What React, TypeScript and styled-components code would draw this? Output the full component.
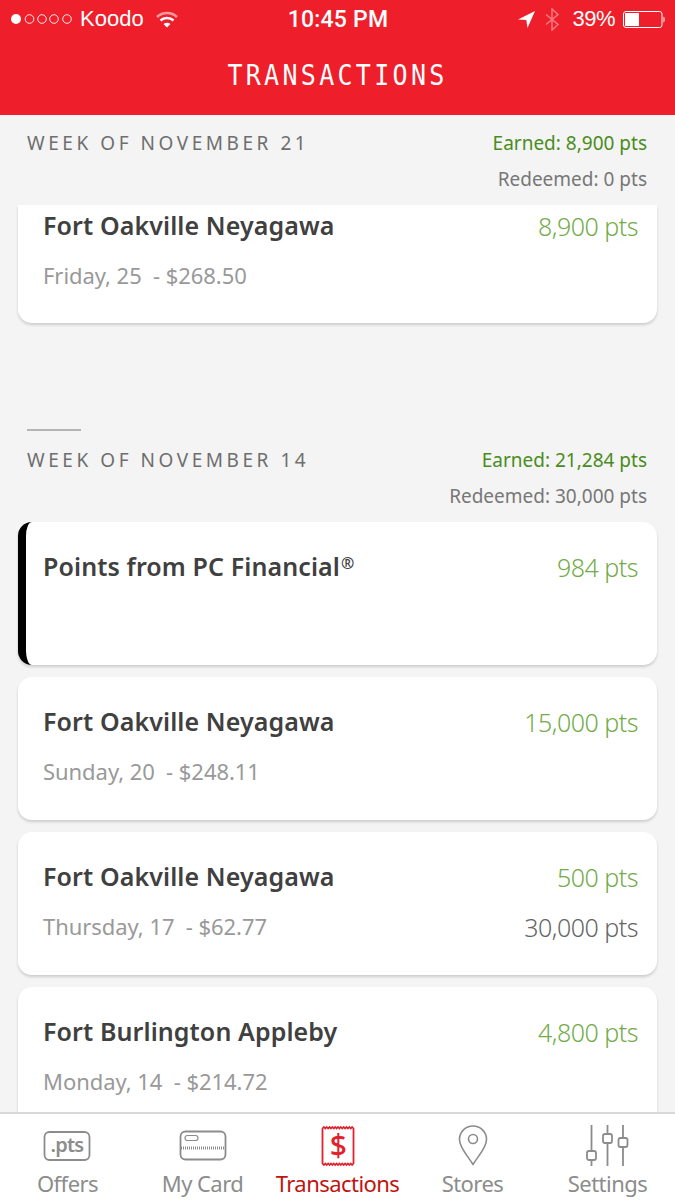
import styled, { createGlobalStyle } from "styled-components";

const GlobalStyle = createGlobalStyle`
  html, body {
    margin: 0;
    padding: 0;
    background: #f4f4f4;
  }
  * {
    box-sizing: border-box;
  }
`;

const Screen = styled.div`
  width: 675px;
  height: 1200px;
  display: flex;
  flex-direction: column;
  overflow: hidden;
  background: #f4f4f4;
  font-family: "Noto Sans", "Open Sans", sans-serif;
`;

const TopBar = styled.header`
  flex: 0 0 115px;
  background: #ee1f2b;
  color: #fff;
`;

const StatusBar = styled.div`
  height: 38px;
  display: grid;
  grid-template-columns: 1fr auto 1fr;
  align-items: center;
  padding: 0 10px 0 11px;
  font-family: "Liberation Sans", sans-serif;
  font-size: 22px;
`;

const StatusLeft = styled.div`
  display: flex;
  align-items: center;
  gap: 8px;
`;

const StatusRight = styled.div`
  display: flex;
  align-items: center;
  justify-content: flex-end;
  gap: 10px;
`;

const Battery = styled.span`
  margin-left: 3px;
  letter-spacing: -0.5px;
`;

const Clock = styled.div`
  font-family: Roboto, sans-serif;
  font-weight: 500;
  font-size: 23px;
  letter-spacing: 0.2px;
`;

const Title = styled.h1`
  margin: 0;
  height: 77px;
  padding-bottom: 2px;
  display: flex;
  align-items: center;
  justify-content: center;
  font-family: "DejaVu Sans Mono", monospace;
  font-weight: 400;
  font-size: 25px;
  letter-spacing: 3.3px;

  span {
    display: inline-block;
    transform: scaleY(1.16);
  }
`;

const Feed = styled.main`
  flex: 1;
  min-height: 0;
  overflow: hidden;
  padding: 10px 18px 0;
`;

const WeekRule = styled.div`
  width: 54px;
  height: 2px;
  margin: 106px 0 11px 9px;
  background: #b5b5b5;
`;

const WeekHeader = styled.div`
  display: flex;
  justify-content: space-between;
  padding: 0 10px 0 9px;
  margin-bottom: 8px;
`;

const WeekLabel = styled.div`
  font-size: 19px;
  line-height: 36px;
  letter-spacing: 3.55px;
  color: #6e6e6e;
`;

const Totals = styled.div`
  text-align: right;
  font-size: 19px;
  line-height: 36px;
`;

const Earned = styled.div`
  color: #4a8c1c;
`;

const Redeemed = styled.div`
  color: #777;
`;

const Card = styled.article<{ $clipped?: boolean; $flagged?: boolean }>`
  display: flex;
  justify-content: space-between;
  height: ${(p) => (p.$clipped ? "118px" : "143px")};
  margin-bottom: 12px;
  padding: ${(p) => (p.$clipped ? "3px" : "27px")} 19px 0 ${(p) => (p.$flagged ? "17px" : "25px")};
  background: #fff;
  border-left: ${(p) => (p.$flagged ? "8px solid #000" : "none")};
  border-radius: ${(p) => (p.$clipped ? "0 0 14px 14px" : "14px")};
  box-shadow: 0 2px 3px rgba(0, 0, 0, 0.16);
`;

const CardText = styled.div`
  margin-top: -1px;
`;

const Place = styled.div`
  font-size: 25px;
  line-height: 36px;
  font-weight: 600;
  letter-spacing: 0.1px;
  color: #404040;

  sup {
    font-size: 16px;
    line-height: 0;
    font-weight: 600;
    vertical-align: 7px;
    margin-left: 1px;
  }
`;

const Detail = styled.div`
  margin-top: 14px;
  font-size: 22px;
  line-height: 36px;
  letter-spacing: -0.05px;
  color: #999;
`;

const Points = styled.div`
  text-align: right;
`;

const PointsLine = styled.div<{ $muted?: boolean }>`
  font-size: 25px;
  line-height: 36px;
  font-weight: 300;
  letter-spacing: -0.5px;
  color: ${(p) => (p.$muted ? "#666" : "#73ab4a")};

  & + & {
    margin-top: 14px;
  }
`;

const TabBar = styled.nav`
  flex: 0 0 88px;
  display: grid;
  grid-template-columns: repeat(5, 135px);
  background: #fff;
  border-top: 2px solid #d8d8d8;
`;

const Tab = styled.div<{ $active?: boolean }>`
  display: flex;
  flex-direction: column;
  align-items: center;
  justify-content: flex-end;
  padding-bottom: 1px;
  color: ${(p) => (p.$active ? "#c0140f" : "#8c8c8c")};
  font-size: 22px;
  line-height: 32px;
  letter-spacing: -0.55px;
  white-space: nowrap;
`;

const TabIcon = styled.svg`
  display: block;
  height: 44px;
  flex: none;
`;

const SignalDots = () => (
  <svg width="61" height="12" viewBox="0 0 61 12">
    <circle cx="5" cy="6" r="5" fill="#fff" />
    {[18.5, 31, 43, 56].map((cx) => (
      <circle key={cx} cx={cx} cy="6" r="4.3" fill="none" stroke="#fff" strokeWidth="0.9" />
    ))}
  </svg>
);

const WifiIcon = () => (
  <svg width="22" height="17" viewBox="0 0 22 17" style={{ marginLeft: 4 }} fill="none" stroke="#fff">
    <path d="M1 6C6.5 0.5 15.5 0.5 21 6" strokeWidth="2.5" opacity="0.55" />
    <path d="M4.5 9.5C8 6.2 14 6.2 17.5 9.5" strokeWidth="2.5" />
    <path d="M11 16.5L7.5 13C9.5 11.3 12.5 11.3 14.5 13Z" fill="#fff" stroke="none" />
  </svg>
);

const LocationArrow = () => (
  <svg width="17" height="17" viewBox="0 0 17 17">
    <path d="M17 0L0 8.5L8.3 8.9L9.5 17Z" fill="#fff" />
  </svg>
);

const BluetoothIcon = () => (
  <svg width="14" height="23" viewBox="0 0 14 23" fill="none" stroke="#fff" strokeWidth="1.5" opacity="0.4">
    <path d="M1 6.5L13 16.5L7 22V1L13 6.5L1 16.5" />
  </svg>
);

const BatteryIcon = () => (
  <svg width="42" height="17" viewBox="0 0 42 17" style={{ marginLeft: -2 }}>
    <rect x="0.5" y="0.5" width="38.5" height="16" rx="2.5" fill="none" stroke="#fff" />
    <rect x="2" y="2" width="14" height="13" fill="#fff" />
    <path d="M40.5 5.5C42 6 42 11 40.5 11.5Z" fill="#fff" />
  </svg>
);

const OffersIcon = () => (
  <TabIcon viewBox="0 0 50 44" width="50">
    <rect x="1.5" y="9" width="45" height="28" rx="5" fill="none" stroke="currentColor" strokeWidth="1.8" />
    <text x="24" y="29" textAnchor="middle" fontFamily="Noto Sans, sans-serif" fontWeight="600" fontSize="20" letterSpacing="-0.8" fill="currentColor">
      .pts
    </text>
  </TabIcon>
);

const CardIcon = () => (
  <TabIcon viewBox="0 0 48 44" width="48">
    <rect x="1.5" y="8.5" width="45" height="28" rx="5" fill="none" stroke="currentColor" strokeWidth="1.8" />
    <rect x="6" y="12.5" width="13" height="5" rx="2.5" fill="none" stroke="currentColor" strokeWidth="1.2" />
    <path d="M2 25H46" stroke="currentColor" strokeWidth="3" strokeDasharray="1 1" />
  </TabIcon>
);

// serrated edge for the receipt, left to right or back
const serration = (y: number, dir: number, teeth: number) =>
  Array.from({ length: teeth }, (_, i) => {
    const step = 31 / teeth;
    const from = dir > 0 ? 1.5 + i * step : 32.5 - i * step;
    const mid = from + (dir * step) / 2;
    const to = from + dir * step;
    return `L${mid.toFixed(2)} ${y - dir * 1.5}L${to.toFixed(2)} ${y}`;
  }).join("");

const ReceiptIcon = () => (
  <TabIcon viewBox="0 0 34 44" width="34">
    <path
      d={`M1.5 5.5${serration(5.5, 1, 11)}V40.5${serration(40.5, -1, 11)}Z`}
      fill="none"
      stroke="#e3212c"
      strokeWidth="1.8"
    />
    <text x="17" y="33" textAnchor="middle" fontFamily="Noto Sans, sans-serif" fontWeight="500" fontSize="30" fill="#e3212c">
      $
    </text>
  </TabIcon>
);

const PinIcon = () => (
  <TabIcon viewBox="0 0 30 44" width="30">
    <path
      d="M15 41.5C10 33 1.5 25 1.5 16.5C1.5 9 7.5 3 15 3C22.5 3 28.5 9 28.5 16.5C28.5 25 20 33 15 41.5Z"
      fill="none"
      stroke="currentColor"
      strokeWidth="1.6"
      strokeLinejoin="round"
    />
    <circle cx="15" cy="16" r="4.5" fill="none" stroke="currentColor" strokeWidth="1.6" />
  </TabIcon>
);

const SlidersIcon = () => (
  <TabIcon viewBox="0 0 44 44" width="44">
    <g fill="none" stroke="currentColor" strokeWidth="1.8">
      <path d="M5.5 2V28M5.5 37V43M21.5 2V11M21.5 20V43M37 2V15M37 24V43" />
      <rect x="1" y="28" width="9" height="9" rx="2" />
      <rect x="17" y="11" width="9" height="9" rx="2" />
      <rect x="32.5" y="15" width="9" height="9" rx="2" />
    </g>
  </TabIcon>
);

const App = () => (
  <Screen>
    <GlobalStyle />
    <TopBar>
      <StatusBar>
        <StatusLeft>
          <SignalDots />
          Koodo
          <WifiIcon />
        </StatusLeft>
        <Clock>10:45 PM</Clock>
        <StatusRight>
          <LocationArrow />
          <BluetoothIcon />
          <Battery>39%</Battery>
          <BatteryIcon />
        </StatusRight>
      </StatusBar>
      <Title>
        <span>TRANSACTIONS</span>
      </Title>
    </TopBar>

    <Feed>
      <WeekHeader>
        <WeekLabel>WEEK OF NOVEMBER 21</WeekLabel>
        <Totals>
          <Earned>Earned: 8,900 pts</Earned>
          <Redeemed>Redeemed: 0 pts</Redeemed>
        </Totals>
      </WeekHeader>
      <Card $clipped>
        <CardText>
          <Place>Fort Oakville Neyagawa</Place>
          <Detail>Friday, 25 &nbsp;- $268.50</Detail>
        </CardText>
        <Points>
          <PointsLine>8,900 pts</PointsLine>
        </Points>
      </Card>

      <WeekRule />
      <WeekHeader>
        <WeekLabel>WEEK OF NOVEMBER 14</WeekLabel>
        <Totals>
          <Earned>Earned: 21,284 pts</Earned>
          <Redeemed>Redeemed: 30,000 pts</Redeemed>
        </Totals>
      </WeekHeader>
      <Card $flagged>
        <CardText>
          <Place>
            Points from PC Financial<sup>®</sup>
          </Place>
        </CardText>
        <Points>
          <PointsLine>984 pts</PointsLine>
        </Points>
      </Card>
      <Card>
        <CardText>
          <Place>Fort Oakville Neyagawa</Place>
          <Detail>Sunday, 20 &nbsp;- $248.11</Detail>
        </CardText>
        <Points>
          <PointsLine>15,000 pts</PointsLine>
        </Points>
      </Card>
      <Card>
        <CardText>
          <Place>Fort Oakville Neyagawa</Place>
          <Detail>Thursday, 17 &nbsp;- $62.77</Detail>
        </CardText>
        <Points>
          <PointsLine>500 pts</PointsLine>
          <PointsLine $muted>30,000 pts</PointsLine>
        </Points>
      </Card>
      <Card>
        <CardText>
          <Place>Fort Burlington Appleby</Place>
          <Detail>Monday, 14 &nbsp;- $214.72</Detail>
        </CardText>
        <Points>
          <PointsLine>4,800 pts</PointsLine>
        </Points>
      </Card>
    </Feed>

    <TabBar>
      <Tab>
        <OffersIcon />
        Offers
      </Tab>
      <Tab>
        <CardIcon />
        My Card
      </Tab>
      <Tab $active>
        <ReceiptIcon />
        Transactions
      </Tab>
      <Tab>
        <PinIcon />
        Stores
      </Tab>
      <Tab>
        <SlidersIcon />
        Settings
      </Tab>
    </TabBar>
  </Screen>
);

export default App;
